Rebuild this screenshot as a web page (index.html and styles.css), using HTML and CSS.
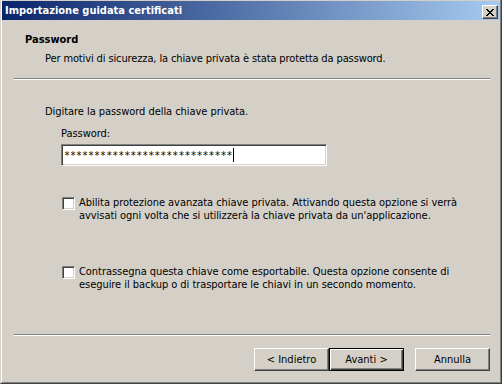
FILE: index.html
```html
<!DOCTYPE html>
<html lang="it">
<head>
  <meta charset="UTF-8" />
  <title>Importazione guidata certificati</title>
  <link rel="stylesheet" href="styles.css">
</head>
<body>

<div class="window">
  <div class="frame">
    <div class="titlebar">
      <span class="title">Importazione guidata certificati</span>
      <button class="close-btn" aria-label="Chiudi">
        <svg width="8" height="7" viewBox="0 0 8 7" shape-rendering="crispEdges">
          <path d="M0 0h2v1H0zM6 0h2v1H6zM1 1h2v1H1zM5 1h2v1H5zM2 2h4v1H2zM3 3h2v1H3zM2 4h4v1H2zM1 5h2v1H1zM5 5h2v1H5zM0 6h2v1H0zM6 6h2v1H6z" fill="#000"/>
        </svg>
      </button>
    </div>

    <div class="header">
      <div class="header-title">Password</div>
      <div class="header-sub">Per motivi di sicurezza, la chiave privata è stata protetta da password.</div>
    </div>
    <div class="sep"></div>

    <div class="content">
      <p class="intro">Digitare la password della chiave privata.</p>
      <div class="field">
        <label for="pwd">Password:</label>
        <div class="input" id="pwd"><span class="stars">****************************</span><span class="caret"></span></div>
      </div>

      <div class="option first">
        <span class="check"></span>
        <span class="opt-text">Abilita protezione avanzata chiave privata. Attivando questa opzione si verrà<br>avvisati ogni volta che si utilizzerà la chiave privata da un'applicazione.</span>
      </div>
      <div class="option second">
        <span class="check"></span>
        <span class="opt-text">Contrassegna questa chiave come esportabile. Questa opzione consente di<br>eseguire il backup o di trasportare le chiavi in un secondo momento.</span>
      </div>
    </div>

    <div class="sep bottom"></div>
    <div class="buttons">
      <button class="btn">&lt; Indietro</button>
      <button class="btn default">Avanti &gt;</button>
      <button class="btn cancel">Annulla</button>
    </div>
  </div>
</div>

</body>
</html>
```

FILE: styles.css
```css
body {
  margin: 0;
  background: #d4d0c8;
  font-family: 'DejaVu Sans Condensed', 'DejaVu Sans', sans-serif;
  font-stretch: condensed;
  font-size: 11px;
  line-height: 13px;
  color: #000;
}

.window {
  width: 502px;
  height: 384px;
  box-sizing: border-box;
  border-left: 1px solid #d4d0c8;
  border-right: 1px solid #404040;
  border-bottom: 1px solid #404040;
}

.frame {
  height: 100%;
  box-sizing: border-box;
  border-left: 1px solid #fff;
  border-right: 1px solid #808080;
  border-bottom: 1px solid #808080;
  display: flex;
  flex-direction: column;
}

.titlebar {
  margin-top: 1px;
  height: 19px;
  background: linear-gradient(to right, #0a246a, #a6caf0);
  display: flex;
  align-items: flex-start;
  justify-content: space-between;
  padding: 0 2px 0 3px;
}

.title {
  color: #fff;
  font-weight: bold;
  line-height: 19px;
}

.close-btn {
  margin-top: 4px;
  width: 16px;
  height: 14px;
  padding: 0;
  background: #d4d0c8;
  border: 1px solid;
  border-color: #fff #404040 #404040 #fff;
  box-shadow: inset -1px -1px 0 #808080;
  display: flex;
  align-items: center;
  justify-content: center;
}

.header {
  padding: 13px 0 0 23px;
}

.header-title {
  font-weight: bold;
}

.header-sub {
  margin: 6px 0 0 20px;
  letter-spacing: -0.12px;
}

.sep {
  margin: 13px 10px 0 12px;
  border-top: 1px solid #808080;
  border-bottom: 1px solid #fff;
}

.content {
  padding-left: 43px;
  letter-spacing: -0.05px;
}

.intro {
  margin: 25px 0 0;
}

.field {
  margin: 9px 0 0 16px;
}

.field label {
  display: block;
}

.input {
  margin-top: 4px;
  width: 266px;
  height: 22px;
  box-sizing: border-box;
  background: #fff;
  border: 1px solid;
  border-color: #808080 #fff #fff #808080;
  box-shadow: inset 1px 1px 0 #404040, inset -1px -1px 0 #d4d0c8;
  display: flex;
  align-items: center;
  padding-left: 2px;
}

.stars {
  font-family: 'DejaVu Sans Mono', monospace;
  font-size: 10px;
  line-height: 13px;
  letter-spacing: 0;
}

.caret {
  width: 1px;
  height: 14px;
  background: #000;
}

.option {
  display: flex;
  align-items: flex-start;
  gap: 4px;
  margin-left: 17px;
  white-space: nowrap;
}

.option.first {
  margin-top: 30px;
}

.option.second {
  margin-top: 43px;
}

.check {
  flex: none;
  width: 13px;
  height: 13px;
  box-sizing: border-box;
  margin-top: 1px;
  background: #fff;
  border: 1px solid;
  border-color: #808080 #fff #fff #808080;
  box-shadow: inset 1px 1px 0 #404040, inset -1px -1px 0 #d4d0c8;
}

.sep.bottom {
  margin-top: auto;
}

.buttons {
  display: flex;
  justify-content: flex-end;
  padding: 12px 10px 11px 0;
}

.btn {
  width: 75px;
  height: 23px;
  padding: 0;
  font: inherit;
  color: #000;
  background: #d4d0c8;
  border: 1px solid;
  border-color: #fff #404040 #404040 #fff;
  box-shadow: inset -1px -1px 0 #808080;
}

.btn.default {
  border-color: #000;
  box-shadow: inset 1px 1px 0 #fff, inset -1px -1px 0 #404040, inset -2px -2px 0 #808080;
}

.btn.cancel {
  margin-left: 11px;
}
```
